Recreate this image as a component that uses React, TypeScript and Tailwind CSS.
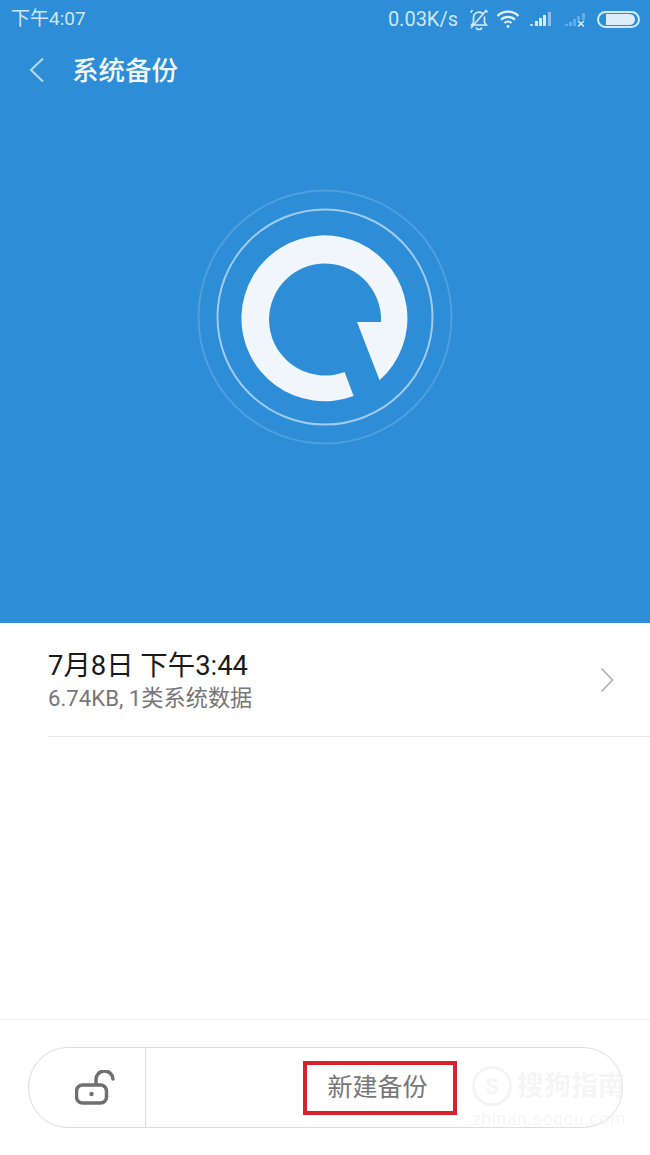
export default function App() {
  return (
    <div className="relative flex h-[1155px] w-[650px] flex-col overflow-hidden bg-white font-['Roboto','Noto_Sans_CJK_SC',sans-serif]">
      <section className="flex h-[623px] flex-col bg-[#2d8dd6]">
        <div className="flex h-[38px] items-center justify-between pl-[11px] pr-[10px] text-[#cfe6f8]">
          <span className="mt-[1px] text-[19px]">下午4:07</span>
          <div className="flex items-center">
            <span className="mr-[9px] text-[20px]">0.03K/s</span>
            <svg width="24" height="24" viewBox="0 0 24 24" fill="none" stroke="#d5e9f9" strokeWidth="1.7" className="mr-[5px]">
              <path d="M6.5 15.5V10.5a5.5 5.5 0 0 1 9.5-3.6M17.5 9.5v6l1.8 2.5H4.7l1.8-2.5M9.5 20.5a2.5 2 0 0 0 5 0" />
              <path d="M3.5 5.5l2-2.5M18.5 3l2 2.5M4 21L19.5 3" />
            </svg>
            <svg width="24" height="20" viewBox="0 0 24 20" fill="none" stroke="#e6f2fb" strokeWidth="2.2" className="mr-[10px]">
              <path d="M1.5 7a15 15 0 0 1 21 0M5 10.8a10 10 0 0 1 14 0M8.5 14a5 5 0 0 1 7 0" />
              <circle cx="12" cy="17.5" r="1.4" fill="#e6f2fb" stroke="none" />
            </svg>
            <svg width="22" height="18" viewBox="0 0 22 18" fill="#d5e9f9" className="mr-[13px]">
              <rect x="0" y="14" width="3" height="2" opacity="0.8" />
              <rect x="5" y="11" width="3" height="5" />
              <rect x="9" y="8" width="3" height="8" />
              <rect x="13" y="5" width="3" height="11" />
              <rect x="18" y="2" width="3" height="14" opacity="0.55" />
            </svg>
            <svg width="22" height="18" viewBox="0 0 22 18" fill="#d5e9f9" className="mr-[10px]">
              <rect x="0" y="14" width="3" height="2" opacity="0.35" />
              <rect x="4" y="12" width="3" height="4" opacity="0.35" />
              <rect x="8" y="9" width="3" height="7" opacity="0.35" />
              <rect x="12" y="6" width="3" height="4" opacity="0.35" />
              <rect x="17" y="3" width="3" height="7" opacity="0.35" />
              <path d="M13 11l6 5.5M19 11l-6 5.5" stroke="#e6f2fb" strokeWidth="1.4" fill="none" />
            </svg>
            <div className="flex h-[17px] w-[43px] items-center justify-end rounded-full border-2 border-[#d5e9f9] pr-[3px]">
              <div className="h-[11px] w-[29px] rounded-r-full bg-[#dcecf9]" />
            </div>
          </div>
        </div>
        <header className="flex h-[64px] items-center pl-[29px]">
          <svg width="16" height="26" viewBox="0 0 16 26" fill="none" stroke="#b9daf4" strokeWidth="2">
            <path d="M14 1.5L2 13l12 11.5" />
          </svg>
          <h1 className="ml-[27px] mt-[2px] text-[26.5px] font-medium text-[#f1f7fc]">系统备份</h1>
        </header>
        <div className="mt-[85px] flex justify-center">
          <svg width="260" height="260" viewBox="0 0 260 260" fill="none">
            <circle cx="130" cy="130" r="126.5" stroke="#ffffff" strokeOpacity="0.16" strokeWidth="2" />
            <circle cx="130" cy="130" r="107.5" stroke="#ffffff" strokeOpacity="0.55" strokeWidth="2" />
            <path
              d="M186 135H162L184.6 193.3A83 83 0 1 0 158.6 209L149.6 185A56 56 0 1 1 186 135Z"
              fill="#f0f6fb"
            />
          </svg>
        </div>
      </section>

      <section className="ml-[48px] flex h-[114px] items-center justify-between border-b border-[#e8e8e8] pr-[36px]">
        <div className="mt-[3px]">
          <div className="text-[27.4px] leading-[34px] text-[#1a1a1a]">7月8日 下午3:44</div>
          <div className="text-[22.2px] leading-[31px] text-[#777777]">6.74KB, 1类系统数据</div>
        </div>
        <svg width="14" height="26" viewBox="0 0 14 26" fill="none" stroke="#b5b5b5" strokeWidth="1.8">
          <path d="M1.5 1.5L12.5 13 1.5 24.5" />
        </svg>
      </section>

      <footer className="mt-auto flex h-[136px] flex-col border-t border-[#f0f0f0] px-[28px] pt-[27px]">
        <div className="flex h-[81px] w-[595px] rounded-[40px] border border-[#dddddd]">
          <div className="flex w-[117px] items-center justify-center border-r border-[#dddddd] pl-[17px]">
            <svg width="42" height="36" viewBox="0 0 42 36" fill="none">
              <rect x="1.5" y="15" width="30" height="18" rx="6" stroke="#707070" strokeWidth="3.5" />
              <circle cx="16.5" cy="24" r="2.2" fill="#707070" />
              <path d="M21 14V10a8.5 8.5 0 0 1 17-1" stroke="#707070" strokeWidth="3.5" strokeLinecap="round" />
            </svg>
          </div>
          <div className="flex flex-1 items-center">
            <div className="ml-[157px] flex h-[54px] w-[154px] items-center justify-center border-[4px] border-[#d8232f] pr-[5px] text-[25px] text-[#777777]">
              新建备份
            </div>
          </div>
        </div>
      </footer>

      <div className="absolute left-[472px] top-[1066px] flex flex-col items-start text-[#f0f0f0] opacity-60 blur-[0.6px]">
        <div className="flex items-center">
          <div className="flex h-[40px] w-[40px] items-center justify-center rounded-full border-[3px] border-[#eeeeee] text-[22px] font-bold">S</div>
          <span className="ml-[5px] text-[27px] font-bold leading-[40px]">搜狗指南</span>
        </div>
        <span className="mt-[2px] text-[18px] leading-[22px] tracking-[0.4px]">zhinan.sogou.com</span>
      </div>
    </div>
  );
}
